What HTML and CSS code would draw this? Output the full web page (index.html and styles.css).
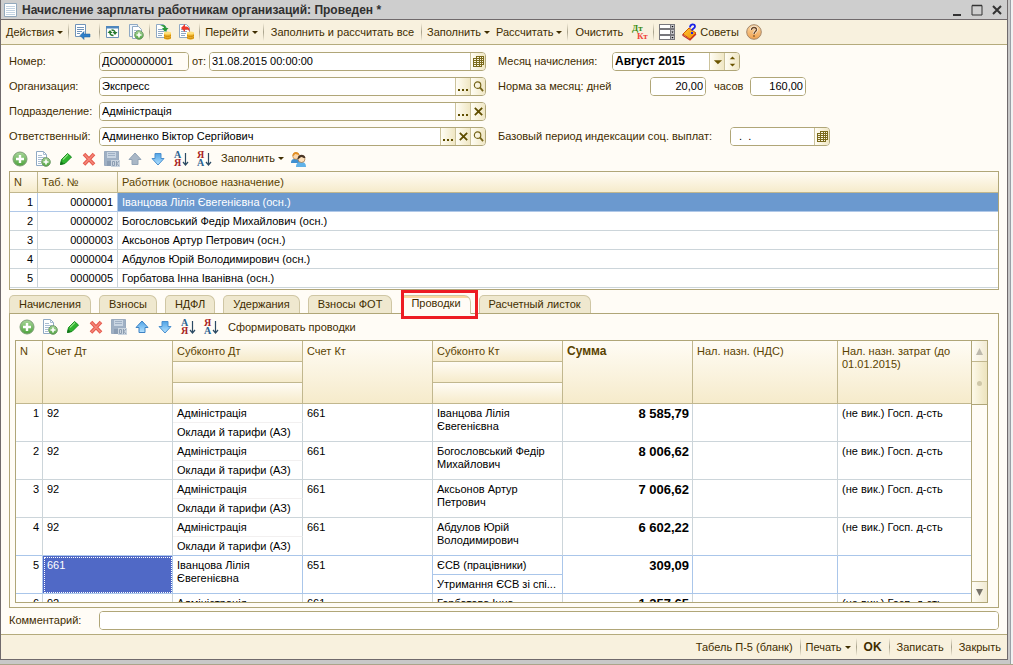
FILE: index.html
```html
<!DOCTYPE html>
<html lang="ru">
<head>
<meta charset="utf-8">
<title>Начисление зарплаты работникам организаций</title>
<link rel="stylesheet" href="styles.css">
</head>
<body>
<svg class="defs" aria-hidden="true">
  <defs>
    <linearGradient id="gGreen" x2="0" y2="1"><stop offset="0" stop-color="#a9d79a"/><stop offset="1" stop-color="#4da23c"/></linearGradient>
    <linearGradient id="gBlue" x2="0" y2="1"><stop offset="0" stop-color="#4fa3e6"/><stop offset="1" stop-color="#b5e2ff"/></linearGradient>
    <linearGradient id="gOrange" x2="0" y2="1"><stop offset="0" stop-color="#fbd9a8"/><stop offset="1" stop-color="#f0a04c"/></linearGradient>
    <linearGradient id="gBook" x2="1" y2="1"><stop offset="0" stop-color="#ffc93a"/><stop offset="1" stop-color="#f08a00"/></linearGradient>
  </defs>
  <symbol id="add" viewBox="0 0 16 16"><circle cx="8" cy="8" r="7" fill="url(#gGreen)" stroke="#7f9f78"/><path d="M8 4v8M4 8h8" stroke="#fff" stroke-width="2.4"/></symbol>
  <symbol id="addpage" viewBox="0 0 16 16"><path d="M1.500.500h7l3 3v11h-10z" fill="#fff" stroke="#8fa9c4"/><path d="M8.500.500v3h3M3 4.500h4M3 6.500h7M3 8.500h5M3 10.500h3M3 12.500h3" fill="none" stroke="#a9bdd2"/><circle cx="11" cy="11" r="4.300" fill="url(#gGreen)" stroke="#6f9a68"/><path d="M11 8.500v5M8.500 11h5" stroke="#fff" stroke-width="1.600"/></symbol>
  <symbol id="pages" viewBox="0 0 16 16"><path d="M1.500.500h8v12h-8z" fill="#eef4fa" stroke="#8fa9c4"/><path d="M4.500 2.500h6l3 3v9h-9z" fill="#fff" stroke="#8fa9c4"/><path d="M6 6.500h5M6 8.500h3" stroke="#a9bdd2"/><circle cx="11" cy="11" r="4.300" fill="url(#gGreen)" stroke="#6f9a68"/><path d="M11 8.500v5M8.500 11h5" stroke="#fff" stroke-width="1.600"/></symbol>
  <symbol id="pen" viewBox="0 0 16 16"><path d="M2.500 13.500l1-5 6-6 4 3.500-6.500 6.500z" fill="#2fb52f" stroke="#168a1d"/><path d="M5 8.500l5-5" stroke="#8be07f" stroke-width="1.300"/><path d="M2 14l1-4 3 3z" fill="#14761a"/></symbol>
  <symbol id="del" viewBox="0 0 16 16"><path d="M3 3l10 10.500M13 3L3 13.500" stroke="#e5584b" stroke-width="3.600"/><path d="M3.500 3.500l9 9.500M12.500 3.500l-9 9.500" stroke="#f4877a" stroke-width="1.600"/></symbol>
  <symbol id="save" viewBox="0 0 16 16"><path d="M.500.500h14v14H.500z" fill="#9fb0c4" stroke="#9aabbf"/><path d="M3 1h9v6H3z" fill="#c9d5e2"/><path d="M4 2.500h7M4 4.500h7" stroke="#9fb0c4"/><path d="M3 10h5v5H3z" fill="#8b9db3"/><path d="M7 9h9v7H7z" fill="#cbd5df"/><path d="M8.500 10.500h2v4h-2zM12.500 10v5M15 10l-2 2.500 2 2.500" fill="none" stroke="#8d9eb2"/></symbol>
  <symbol id="up" viewBox="0 0 16 16"><path d="M8 2l6 6.500h-3V13.500H5V8.500H2z" fill="url(#gBlue)" stroke="#3d82c4"/></symbol>
  <symbol id="upoff" viewBox="0 0 16 16"><path d="M8 2l6 6.500h-3V13.500H5V8.500H2z" fill="#a9b7c6" stroke="#93a4b6"/></symbol>
  <symbol id="down" viewBox="0 0 16 16"><path d="M8 14l6-6.500h-3V2.500H5V7.500H2z" fill="url(#gBlue)" stroke="#4a8fce"/></symbol>
  <symbol id="sortarrow" viewBox="0 0 16 16"><path d="M12.500 2v11M10 11l2.500 3 2.500-3" fill="none" stroke="#2b4a63" stroke-width="1.200"/></symbol>
  <symbol id="grid" viewBox="0 0 11 11"><path d="M3 0h8v9H9v2H0V2h3z" fill="#7a6a1c"/><path d="M1 3h2v1H1zM4 3h2v1H4zM7 3h1v1H7zM1 5h2v1H1zM4 5h2v1H4zM7 5h1v1H7zM1 7h2v1H1zM4 7h2v1H4zM7 7h1v1H7zM1 9h2v1H1zM4 9h2v1H4zM7 9h1v1H7zM4 1h2v1H4zM7 1h1v1H7zM9 1h1v1H9zM9 3h1v1H9zM9 5h1v1H9zM9 7h1v1H9z" fill="#fbf6e2"/></symbol>
  <symbol id="lens" viewBox="0 0 12 12"><circle cx="5" cy="4.500" r="3.500" fill="none" stroke="#75641a" stroke-width="1.300"/><path d="M7.500 7l3.500 4" stroke="#75641a" stroke-width="2"/></symbol>
  <symbol id="cross" viewBox="0 0 12 12"><path d="M2 2l8 8M10 2l-8 8" stroke="#5f4d00" stroke-width="2"/></symbol>
  <symbol id="dots" viewBox="0 0 11 11"><path d="M0 8h2v2H0zM4 8h2v2H4zM8 8h2v2H8z" fill="#5f4d00"/></symbol>
  <symbol id="coins" viewBox="0 0 16 16"><path d="M1.500.500h7l3 3v10h-10z" fill="#fff" stroke="#8fa9c4"/><path d="M3 5.500h6M3 7.500h6M3 9.500h5M3 11.500h4" stroke="#8fa9c4"/><path d="M9 9v5.500c1 1.500 6 1.500 7 0V9z" fill="#f0b42c"/><ellipse cx="12.500" cy="9" rx="3.500" ry="1.500" fill="#ffe07a"/><path d="M9 11.500c1 1.200 6 1.200 7 0M9 13.500c1 1.200 6 1.200 7 0" fill="none" stroke="#c98608"/></symbol>
</svg>

<div class="desktop">
<main class="window">
  <header class="titlebar">
    <svg class="icon" viewBox="0 0 16 16"><path d="M2.500 1.500h12v13h-12z" fill="#fff" stroke="#93a9bd"/><path d="M4 4.500h9M4 6.500h9M4 8.500h9M4 10.500h9M4 12.500h9" stroke="#c3d3e2"/></svg>
    <h1>Начисление зарплаты работникам организаций: Проведен *</h1>
    <button class="winbtn" aria-label="Свернуть"><svg viewBox="0 0 12 12"><path d="M2 10h8v2H2z" fill="#333"/></svg></button>
    <button class="winbtn" aria-label="Развернуть"><svg viewBox="0 0 12 12"><path d="M1 1.500h10v9.500H1z" fill="none" stroke="#333"/><path d="M1 1.500h10" stroke="#333" stroke-width="1.500"/></svg></button>
    <button class="winbtn" aria-label="Закрыть окно"><svg viewBox="0 0 12 12"><path d="M2 2l8 8M10 2l-8 8" stroke="#333" stroke-width="2"/></svg></button>
  </header>

  <nav class="toolbar">
    <button class="menu">Действия</button><i class="sep"></i>
    <button class="ib wide" aria-label="Перейти к списку"><svg class="icon" viewBox="0 0 16 16"><path d="M1.500.500h10v12h-10z" fill="#fff" stroke="#6f93b8"/><path d="M3 3.500h7M3 5.500h7M3 7.500h5M3 9.500h3" stroke="#6f93b8"/><path d="M6 11.500l4-4v2.500h6v3h-6v2.500z" fill="#2f7fc8" stroke="#1d609f" stroke-width=".5"/></svg></button><i class="sep"></i>
    <button class="ib" aria-label="Обновить"><svg class="icon" viewBox="0 0 16 16"><path d="M1.500 2.500h12v11h-12z" fill="#fff" stroke="#6f93b8"/><path d="M1 2h13v2.500H1z" fill="#4d86bd"/><path d="M2.500 9L5 6l2.500 3zM7.500 8L10 11l2.500-3z" fill="#27792e"/><path d="M5 8.500c0 2.500 2 3 3.500 3M10 9c0-2-1.500-3-3.500-3" fill="none" stroke="#27792e" stroke-width="1.500"/></svg></button>
    <button class="ib" aria-label="Скопировать"><svg class="icon"><use href="#pages"/></svg></button><i class="sep"></i>
    <button class="ib" aria-label="Провести"><svg class="icon" viewBox="0 0 16 16"><use href="#coins"/><path d="M5 2c3-2 6-1 6 2h2.500L10 8 7 4h2c0-1.500-2-2-4-2z" fill="#2a9a35"/></svg></button>
    <button class="ib" aria-label="Отмена проведения"><svg class="icon" viewBox="0 0 16 16"><use href="#coins"/><path d="M3 4l4-4v2.500c4 0 5 2 4.500 5.500C11 6 10 5.500 7 5.500V8z" fill="#ec3a2c"/></svg></button><i class="sep"></i>
    <button class="menu">Перейти</button><i class="sep"></i>
    <button class="txt">Заполнить и рассчитать все</button><i class="sep"></i>
    <button class="menu">Заполнить</button>
    <button class="menu">Рассчитать</button><i class="sep"></i>
    <button class="txt">Очистить</button>
    <button class="ib" aria-label="Результат проведения"><svg class="icon" viewBox="0 0 16 16"><text x="0" y="7" class="dt">Дт</text><text x="5" y="15" class="kt">Кт</text></svg></button><i class="sep"></i>
    <button class="ib" aria-label="Настройка"><svg class="icon" viewBox="0 0 16 16"><path d="M0 0h16v16H0z" fill="#77777c"/><path d="M1 1h10v3H1zM1 6h10v4H1zM1 12h10v3H1z" fill="#fff"/><path d="M12 1h3v3h-3zM12 6h3v4h-3zM12 12h3v3h-3z" fill="#c6c6ca"/><path d="M12.500 2h2l-1 1.500zM12.500 7.500h2l-1 1.500zM12.500 13h2l-1 1.500z" fill="#000"/></svg></button>
    <button class="tips"><svg class="icon" viewBox="0 0 16 16"><path d="M1 10l6-6 7 5-6 6z" fill="url(#gBook)" stroke="#d25a00"/><path d="M1 10v1.500l7 4.500 6-6" fill="none" stroke="#c5302a" stroke-width="1.300"/><path d="M8 3.500C8-.5 13-.5 13 2.500c0 2-3 2-3 4" fill="none" stroke="#1a22e8" stroke-width="1.800"/><path d="M9 8h2v2H9z" fill="#1a22e8"/></svg>Советы</button>
    <button class="ib" aria-label="Справка"><svg class="icon" viewBox="0 0 16 16"><circle cx="8" cy="8" r="7.300" fill="url(#gOrange)" stroke="#a5876a"/><path d="M5.500 6c0-3.500 5-3 5-.3C10.500 7.500 8 7.500 8 10" fill="none" stroke="#fff" stroke-width="2.600"/><path d="M5.500 6c0-3.500 5-3 5-.3C10.500 7.500 8 7.500 8 10M8 11.300v1.500" fill="none" stroke="#6b4522" stroke-width="1.400"/></svg></button>
  </nav>

  <div class="content">
    <form class="form">
      <div class="col main">
        <div class="row"><label class="cap" for="num">Номер:</label><span class="field num"><input id="num" value="ДО000000001"></span><label for="date">от:</label><span class="field grow"><input id="date" value="31.08.2015 00:00:00"><button type="button" aria-label="Календарь"><svg><use href="#grid"/></svg></button></span></div>
        <div class="row"><label class="cap" for="org">Организация:</label><span class="field grow"><input id="org" value="Экспресс"><button type="button" aria-label="Выбрать"><svg><use href="#dots"/></svg></button><button type="button" aria-label="Открыть"><svg><use href="#lens"/></svg></button></span></div>
        <div class="row"><label class="cap" for="dep">Подразделение:</label><span class="field grow"><input id="dep" value="Адміністрація"><button type="button" aria-label="Выбрать"><svg><use href="#dots"/></svg></button><button type="button" aria-label="Очистить"><svg><use href="#cross"/></svg></button></span></div>
        <div class="row"><label class="cap" for="resp">Ответственный:</label><span class="field grow"><input id="resp" value="Админенко Віктор Сергійович"><button type="button" aria-label="Выбрать"><svg><use href="#dots"/></svg></button><button type="button" aria-label="Очистить"><svg><use href="#cross"/></svg></button><button type="button" aria-label="Открыть"><svg><use href="#lens"/></svg></button></span></div>
      </div>
      <div class="col">
        <div class="row"><label class="c1" for="month">Месяц начисления:</label><span class="field month"><select id="month"><option>Август 2015</option></select><button type="button" aria-label="Список"><svg viewBox="0 0 12 12"><path d="M2 4.500h9L6.500 9z" fill="#6b5500"/></svg></button><button type="button" aria-label="Изменить"><svg viewBox="0 0 12 12"><path d="M3 3.500h6L6 .500zM3 8.500h6l-3 3z" fill="#6b5500"/></svg></button></span></div>
        <div class="row"><label class="c2" for="days">Норма за месяц: дней</label><span class="field small"><input id="days" value="20,00"></span><label class="hours" for="hours">часов</label><span class="field small"><input id="hours" value="160,00"></span></div>
        <div class="row"></div>
        <div class="row"><label class="c3" for="base">Базовый период индексации соц. выплат:</label><span class="field base"><input id="base" value="  .  ."><button type="button" aria-label="Календарь"><svg><use href="#grid"/></svg></button></span></div>
      </div>
    </form>

    <div class="tools">
      <button class="ib" aria-label="Добавить"><svg class="icon"><use href="#add"/></svg></button>
      <button class="ib" aria-label="Скопировать"><svg class="icon"><use href="#addpage"/></svg></button>
      <button class="ib" aria-label="Изменить"><svg class="icon"><use href="#pen"/></svg></button>
      <button class="ib" aria-label="Удалить"><svg class="icon"><use href="#del"/></svg></button>
      <button class="ib" aria-label="Закончить редактирование"><svg class="icon"><use href="#save"/></svg></button>
      <button class="ib" aria-label="Вверх"><svg class="icon"><use href="#upoff"/></svg></button>
      <button class="ib" aria-label="Вниз"><svg class="icon"><use href="#down"/></svg></button>
      <button class="ib" aria-label="По возрастанию"><svg class="icon" viewBox="0 0 16 16"><text x="1" y="7" class="sb">А</text><text x="1" y="15" class="sr">Я</text><use href="#sortarrow"/></svg></button>
      <button class="ib" aria-label="По убыванию"><svg class="icon" viewBox="0 0 16 16"><text x="1" y="7" class="sr">Я</text><text x="1" y="15" class="sb">А</text><use href="#sortarrow"/></svg></button>
      <button class="menu">Заполнить</button>
      <button class="ib" aria-label="Подбор"><svg class="icon" viewBox="0 0 16 16"><path d="M0 12c0-4 2-4 5-4s4 2 4 4z" fill="#3f8fd0"/><circle cx="5" cy="5" r="3.300" fill="#fbd7ab" stroke="#b5702c" stroke-width=".6"/><path d="M1.500 5c0-5 6-5 7-1-2 0-3-1-4-1s-1 2-3 2z" fill="#e38e22"/><path d="M5 16c0-4 2-5 5-5s5 1 5 5z" fill="#61b2e8"/><circle cx="10.500" cy="8" r="3.500" fill="#fde0ba" stroke="#8a5a2b" stroke-width=".6"/><path d="M6.500 8c0-5 7-6 8-1-2 .500-3-1-4-1s-2 2-4 2z" fill="#4a3626"/></svg></button>
    </div>

    <div class="box">
      <table class="people">
        <colgroup><col class="w-n"><col class="w-tab"><col></colgroup>
        <thead><tr><th>N</th><th>Таб. №</th><th>Работник (основое назначение)</th></tr></thead>
        <tbody>
          <tr class="sel"><td>1</td><td>0000001</td><td>Іванцова Лілія Євегенієвна (осн.)</td></tr>
          <tr><td>2</td><td>0000002</td><td>Богословський Федір Михайлович (осн.)</td></tr>
          <tr><td>3</td><td>0000003</td><td>Аксьонов Артур Петрович (осн.)</td></tr>
          <tr><td>4</td><td>0000004</td><td>Абдулов Юрій Володимирович (осн.)</td></tr>
          <tr><td>5</td><td>0000005</td><td>Горбатова Інна Іванівна (осн.)</td></tr>
        </tbody>
      </table>
    </div>

    <div class="tabs" role="tablist">
      <button role="tab">Начисления</button><button role="tab">Взносы</button><button role="tab">НДФЛ</button><button role="tab">Удержания</button><button role="tab">Взносы ФОТ</button><button role="tab" class="active" aria-selected="true">Проводки</button><button role="tab">Расчетный листок</button>
    </div>

    <section class="panel">
      <div class="tools">
        <button class="ib" aria-label="Добавить"><svg class="icon"><use href="#add"/></svg></button>
        <button class="ib" aria-label="Скопировать"><svg class="icon"><use href="#addpage"/></svg></button>
        <button class="ib" aria-label="Изменить"><svg class="icon"><use href="#pen"/></svg></button>
        <button class="ib" aria-label="Удалить"><svg class="icon"><use href="#del"/></svg></button>
        <button class="ib" aria-label="Закончить редактирование"><svg class="icon"><use href="#save"/></svg></button>
        <button class="ib" aria-label="Вверх"><svg class="icon"><use href="#up"/></svg></button>
        <button class="ib" aria-label="Вниз"><svg class="icon"><use href="#down"/></svg></button>
        <button class="ib" aria-label="По возрастанию"><svg class="icon" viewBox="0 0 16 16"><text x="1" y="7" class="sb">А</text><text x="1" y="15" class="sr">Я</text><use href="#sortarrow"/></svg></button>
        <button class="ib" aria-label="По убыванию"><svg class="icon" viewBox="0 0 16 16"><text x="1" y="7" class="sr">Я</text><text x="1" y="15" class="sb">А</text><use href="#sortarrow"/></svg></button>
        <button class="txt">Сформировать проводки</button>
      </div>
      <div class="entries-box">
        <div class="entries-scroll">
        <table class="entries">
          <colgroup><col class="w-n2"><col class="w-acc"><col class="w-acc"><col class="w-acc"><col class="w-acc"><col class="w-acc"><col class="w-tax"><col></colgroup>
          <thead>
            <tr><th rowspan="3">N</th><th rowspan="3">Счет Дт</th><th>Субконто Дт</th><th rowspan="3">Счет Кт</th><th>Субконто Кт</th><th rowspan="3" class="b">Сумма</th><th rowspan="3">Нал. назн. (НДС)</th><th rowspan="3" class="end">Нал. назн. затрат (до 01.01.2015)</th></tr>
            <tr><th></th><th></th></tr>
            <tr><th></th><th></th></tr>
          </thead>
          <tbody>
            <tr><td rowspan="2" class="no">1</td><td rowspan="2">92</td><td class="half">Адміністрація</td><td rowspan="2">661</td><td rowspan="2">Іванцова Лілія Євегенієвна</td><td rowspan="2" class="sum">8 585,79</td><td rowspan="2"></td><td rowspan="2" class="end">(не вик.) Госп. д-сть</td></tr>
            <tr><td>Оклади й тарифи (АЗ)</td></tr>
          </tbody>
          <tbody>
            <tr><td rowspan="2" class="no">2</td><td rowspan="2">92</td><td class="half">Адміністрація</td><td rowspan="2">661</td><td rowspan="2">Богословський Федір Михайлович</td><td rowspan="2" class="sum">8 006,62</td><td rowspan="2"></td><td rowspan="2" class="end">(не вик.) Госп. д-сть</td></tr>
            <tr><td>Оклади й тарифи (АЗ)</td></tr>
          </tbody>
          <tbody>
            <tr><td rowspan="2" class="no">3</td><td rowspan="2">92</td><td class="half">Адміністрація</td><td rowspan="2">661</td><td rowspan="2">Аксьонов Артур Петрович</td><td rowspan="2" class="sum">7 006,62</td><td rowspan="2"></td><td rowspan="2" class="end">(не вик.) Госп. д-сть</td></tr>
            <tr><td>Оклади й тарифи (АЗ)</td></tr>
          </tbody>
          <tbody class="before">
            <tr><td rowspan="2" class="no">4</td><td rowspan="2">92</td><td class="half">Адміністрація</td><td rowspan="2">661</td><td rowspan="2">Абдулов Юрій Володимирович</td><td rowspan="2" class="sum">6 602,22</td><td rowspan="2"></td><td rowspan="2" class="end">(не вик.) Госп. д-сть</td></tr>
            <tr><td>Оклади й тарифи (АЗ)</td></tr>
          </tbody>
          <tbody class="current">
            <tr><td rowspan="2" class="no">5</td><td rowspan="2" class="cell">661</td><td rowspan="2">Іванцова Лілія Євегенієвна</td><td rowspan="2">651</td><td>ЄСВ (працівники)</td><td rowspan="2" class="sum">309,09</td><td rowspan="2"></td><td rowspan="2" class="end"></td></tr>
            <tr><td class="cut">Утримання ЄСВ зі спі...</td></tr>
          </tbody>
          <tbody>
            <tr><td rowspan="2" class="no">6</td><td rowspan="2">92</td><td class="half">Адміністрація</td><td rowspan="2">661</td><td rowspan="2">Горбатова Інна Іванівна</td><td rowspan="2" class="sum">1 257,65</td><td rowspan="2"></td><td rowspan="2" class="end">(не вик.) Госп. д-сть</td></tr>
            <tr><td>Оклади й тарифи (АЗ)</td></tr>
          </tbody>
        </table>
        </div>
        <div class="scrollbar">
          <button aria-label="Прокрутить вверх"><svg viewBox="0 0 8 8"><path d="M4 0l4 8H0z" fill="#bdb9ac"/></svg></button>
          <span class="thumb"><i></i></span>
          <button class="last" aria-label="Прокрутить вниз"><svg viewBox="0 0 8 8"><path d="M0 0h8L4 8z" fill="#77736a"/></svg></button>
        </div>
      </div>
    </section>

    <div class="row comment"><label class="cap" for="comment">Комментарий:</label><span class="field grow"><input id="comment"></span></div>
  </div>

  <footer class="toolbar bottom">
    <button class="txt">Табель П-5 (бланк)</button><i class="sep"></i>
    <button class="menu">Печать</button><i class="sep"></i>
    <button class="txt b">OK</button><i class="sep"></i>
    <button class="txt">Записать</button><i class="sep"></i>
    <button class="txt">Закрыть</button>
  </footer>
</main>
</div>
</body>
</html>
```

FILE: styles.css
```css
* { box-sizing: border-box; }
body {
  margin: 0;
  font: 11px/13px "Liberation Sans", Arial, sans-serif;
  color: #3f2d00;
  background: #c8c8c8;
}
button, input, select { font: inherit; color: inherit; margin: 0; padding: 0; border: 0; background: none; }
button { white-space: nowrap; }
.defs { position: absolute; width: 0; height: 0; }
.icon { width: 16px; height: 16px; display: block; flex: none; overflow: visible; }
.b { font-weight: bold; font-size: 12px; }

.desktop {
  height: 100vh;
  min-height: 560px;
  padding: 0 5px 5px 0;
  background: linear-gradient(#aaa58a, #aaa58a) bottom / 100% 1px no-repeat,
              linear-gradient(90deg, #c8c8c8 calc(100% - 3px), #9aa0a6 calc(100% - 3px), #9aa0a6 calc(100% - 2px), #f1f1f1 calc(100% - 2px));
}
.window { height: 100%; display: flex; flex-direction: column; border: 1px solid #706a6c; border-top: 0; background: #fffcf6; }

.titlebar { display: flex; align-items: center; height: 20px; padding: 0 0 0 1px; background: #cecece; border-bottom: 1px solid #706a6c; flex: none; }
.titlebar h1 { flex: 1; margin: 0 0 0 4px; font-size: 12px; font-weight: bold; line-height: 16px; color: #303030; }
.winbtn { width: 20px; height: 16px; display: flex; align-items: center; justify-content: center; }
.winbtn svg { width: 12px; height: 12px; }

.toolbar { display: flex; align-items: center; height: 25px; flex: none; padding: 0 5px; background: #f8f1de; border-bottom: 1px solid #b5ab7c; }
.bottom { justify-content: flex-end; padding-right: 4px; border-bottom: 0; border-top: 1px solid #b5ab7c; }
.sep { width: 1px; height: 18px; margin: 0 5px; background: linear-gradient(#f8f1de, #a8a28c, #f8f1de); }
.txt { padding: 0 2px; }
.ib { width: 16px; height: 16px; flex: none; }
.ib.wide { width: 20px; }
.ib + .ib, .txt + .ib, .menu + .ib { margin-left: 7px; }
.menu + .menu { margin-left: 6px; }
.menu::after { content: ""; display: inline-block; margin-left: 3px; vertical-align: 2px; border: 3px solid transparent; border-top-color: #3f2d00; border-bottom: 0; }
.tips { display: flex; align-items: center; gap: 2px; margin-left: 7px; }
.tips + .ib { margin-left: 7px; }
.dt, .kt { font: bold 9px "Liberation Serif", serif; fill: #3c8c14; }
.kt { fill: #f0443c; }
.sb, .sr { font: bold 10px "Liberation Serif", serif; fill: #2b6290; }
.sr { fill: #a82424; }

.content { flex: 1; min-height: 0; display: flex; flex-direction: column; padding: 7px 8px 4px 8px; }
.form { display: flex; gap: 12px; }
.col { display: flex; flex-direction: column; gap: 6px; }
.main { width: 477px; }
.row { display: flex; align-items: center; height: 19px; flex: none; }
.cap { width: 90px; }
.num { width: 90px; margin-right: 3px; }
.num + label { width: 17px; }
.grow { flex: 1; }
.field { display: flex; height: 19px; background: #fff; border: 1px solid #b0a678; border-radius: 4px; overflow: hidden; min-width: 0; }
.field input, .field select { flex: 1; min-width: 0; width: 0; padding-left: 2px; color: #000; background: #fff; outline: 0; appearance: none; }
.field.num input { background: #fffcf6; }
.field button { width: 15px; flex: none; display: flex; align-items: center; justify-content: center; border-left: 1px solid #ccc39c; background: linear-gradient(90deg, #fffdf4, #f0e7c4); }
.field svg { width: 11px; height: 11px; }
.month { width: 128px; }
.field.month select { font-weight: bold; font-size: 12px; }
.small { width: 56px; }
.field.small input { text-align: right; padding-right: 2px; }
.c1 { width: 114px; }
.c2 { width: 152px; }
.c3 { width: 232px; }
.hours { width: 36px; margin-left: 8px; }
.base { width: 100px; }
#base { white-space: pre; }

.tools { display: flex; align-items: center; height: 25px; padding: 0 0 0 3px; flex: none; }
.panel .tools { height: 26px; }
.tools .ib + .menu { margin-left: 9px; }
.tools .ib + .txt { margin-left: 7px; }

table { width: 100%; border-collapse: separate; border-spacing: 0; table-layout: fixed; background: #fff; color: #000; }
th { text-align: left; font-weight: normal; color: #5a4300; vertical-align: top; padding: 4px 4px 0; border-right: 1px solid #c1b78e; border-bottom: 1px solid #c1b78e; background: linear-gradient(#fffcf5, #f6ebcb); }
td { padding: 3px 4px 0; vertical-align: top; border-right: 1px solid #ccd5da; border-bottom: 1px solid #ccd5da; }
.end, .people th:last-child, .people td:last-child { border-right: 0; }
.box { border: 1px solid #b0a678; flex: none; padding-bottom: 1px; background: #fff; }
.people tr { height: 19px; }
.people thead tr { height: 21px; }
.people td:not(:last-child) { text-align: right; }
.sel td { border-color: #b0c8e8; }
.sel td:last-child { background: #6b99cf; color: #fff; }
.w-n { width: 28px; }
.w-tab { width: 80px; }

.tabs { display: flex; gap: 8px; margin-top: 5px; height: 18px; flex: none; }
.tabs button { padding: 0 9px; background: #efe8cf; border: 1px solid #cfc6a4; border-bottom: 0; border-radius: 5px 7px 0 0; }
.tabs .active { position: relative; z-index: 1; margin-left: 1px; margin-bottom: -1px; padding-bottom: 3px; background: linear-gradient(#fbd9a0 2px, #fffcf6 2px); }
.active::after { content: ""; position: absolute; inset: -6px -8px -5px -1px; border: 3px solid #ed1c24; }

.panel { flex: 1; min-height: 0; display: flex; flex-direction: column; border: 1px solid #b0a678; padding: 0 10px 4px 5px; }
.panel .tools { padding-left: 4px; }
.entries-box { flex: 1; min-height: 0; display: flex; border: 1px solid #b0a678; }
.entries-scroll { flex: 1; min-width: 0; overflow: hidden; }
.entries tbody tr { height: 19px; }
.entries thead tr { height: 21px; }
.entries .no { text-align: right; padding-right: 3px; }
.entries .half { border-bottom-color: #f2f0f0; }
.entries .b { font-weight: bold; font-size: 12px; }
.entries .sum { text-align: right; font-weight: bold; font-size: 13px; padding-right: 3px; }
.before td[rowspan], .before tr:last-child td, .current td { border-bottom-color: #aac6ea; }
.current td { border-right-color: #aac6ea; }
.current .cell { background: #5069c6; color: #fff; outline: 1px dotted #fff; outline-offset: -2px; }
.cut { white-space: nowrap; padding-right: 0; }
.w-n2 { width: 27px; }
.w-acc { width: 130px; }
.w-tax { width: 145px; }

.scrollbar { width: 16px; flex: none; display: flex; flex-direction: column; border-left: 1px solid #b0a678; background: #fffcf6; }
.scrollbar button { height: 21px; display: flex; align-items: center; justify-content: center; background: linear-gradient(90deg, #fffdf6, #f1ead2); border-bottom: 1px solid #c1b78e; }
.scrollbar svg { width: 7px; height: 7px; }
.scrollbar .last { margin-top: auto; border-bottom: 0; border-top: 1px solid #c1b78e; }
.thumb { height: 43px; display: flex; align-items: center; justify-content: center; background: linear-gradient(90deg, #fdf9e9, #ece3bd); border-bottom: 1px solid #b0a678; }
.thumb i { width: 5px; height: 5px; border-radius: 50%; background: #cfc7a8; }

.comment { margin-top: 3px; }
```
